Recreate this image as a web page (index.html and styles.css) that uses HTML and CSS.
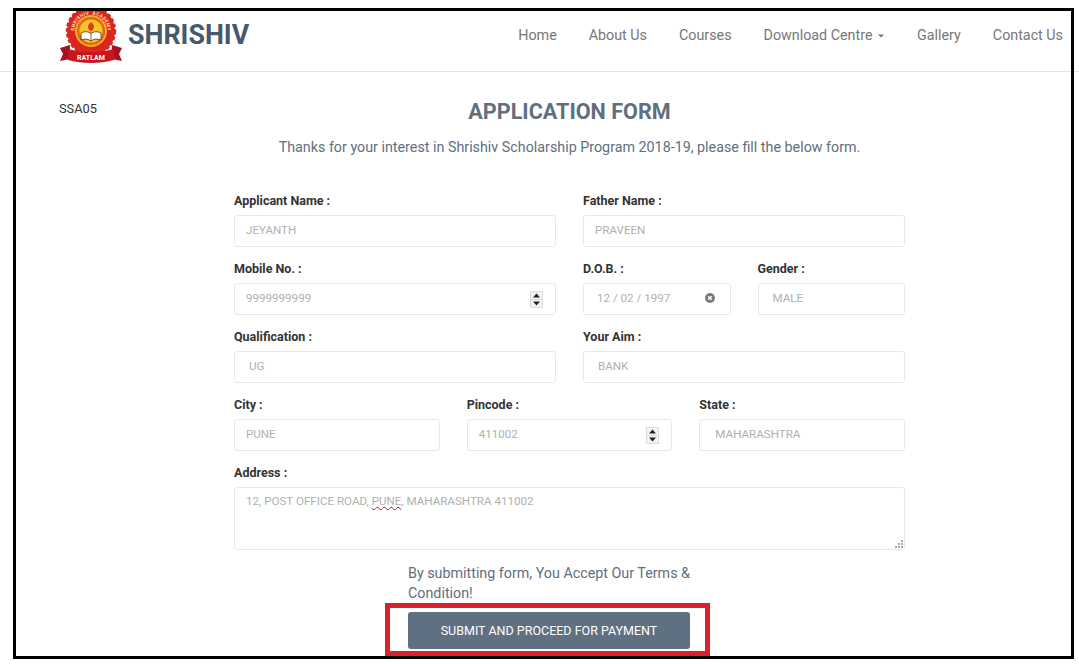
FILE: index.html
```html
<!DOCTYPE html>
<html lang="en">
<head>
<meta charset="utf-8">
<title>Shrishiv Application Form</title>
<link rel="stylesheet" href="styles.css">
</head>
<body>
<header class="navbar">
  <a class="brand">
    <svg class="logo" viewBox="0 0 62 54" aria-hidden="true">
      <defs><path id="logo-arc" d="M15.5 27 A 16.6 16.6 0 1 1 46.5 27"/></defs>
      <circle cx="31" cy="21" r="24" fill="#d9261f" stroke="#d9261f" stroke-width="2.4" stroke-dasharray="3.5 2.2"/>
      <circle cx="31" cy="21" r="16" fill="#f0a91d"/>
      <circle cx="31" cy="21" r="14.5" fill="#e8661c" stroke="#f7cf3a" stroke-width="1" stroke-dasharray="1.5 1"/>
      <circle cx="31" cy="21" r="11.5" fill="#f6c52a"/>
      <text class="logo-ring"><textPath href="#logo-arc" startOffset="50%" text-anchor="middle">SHRISHIV  ACADEMY</textPath></text>
      <path d="M31 12 C34.5 15 35.5 18 31 21.5 C26.5 18 27.5 15 31 12 Z" fill="#dc3a1c"/>
      <path d="M21 23 C25 21 28.5 21.5 31 23.5 C33.5 21.5 37 21 41 23 L41 30 C37 28.5 33.5 29 31 31 C28.5 29 25 28.5 21 30 Z" fill="#fff" stroke="#5e3a17" stroke-width="0.9"/>
      <path d="M31 23.5 V31" stroke="#5e3a17" stroke-width="0.8"/>
      <path d="M10 35 L0 38 L3 44 L0 51 L10 49 Z" fill="#a8121f"/>
      <path d="M52 35 L62 38 L59 44 L62 51 L52 49 Z" fill="#a8121f"/>
      <path d="M8 39 C22 43 40 43 54 39 L54 50 C40 54 22 54 8 50 Z" fill="#c8161f"/>
      <text class="logo-ratlam" x="31" y="49.5" text-anchor="middle">RATLAM</text>
    </svg>
    <span class="brand-name">SHRISHIV</span>
  </a>
  <nav class="nav-links">
    <a>Home</a>
    <a>About Us</a>
    <a>Courses</a>
    <a>Download Centre <i class="caret"></i></a>
    <a>Gallery</a>
    <a>Contact Us</a>
  </nav>
</header>

<main class="content">
  <div class="code">SSA05</div>
  <form class="form">
    <div class="heading-block">
      <h1>APPLICATION FORM</h1>
      <p class="intro">Thanks for your interest in Shrishiv Scholarship Program 2018-19, please fill the below form.</p>
    </div>
    <div class="row">
      <div class="field"><label>Applicant Name :</label><input class="ctl" value="JEYANTH"></div>
      <div class="field"><label>Father Name :</label><input class="ctl" value="PRAVEEN"></div>
    </div>
    <div class="row">
      <div class="field">
        <label>Mobile No. :</label>
        <div class="ctl-wrap">
          <input class="ctl" value="9999999999">
          <svg class="spin" viewBox="0 0 13 17" aria-hidden="true"><rect width="13" height="17" fill="#dcdcdc"/><rect x="1" y="1" width="11" height="7" fill="#f4f4f4"/><rect x="1" y="9" width="11" height="7" fill="#f4f4f4"/><path d="M6.5 2.5 L10 6.5 H3 Z M6.5 14.5 L3 10.5 H10 Z" fill="#222"/></svg>
        </div>
      </div>
      <div class="field">
        <div class="row">
          <div class="field">
            <label>D.O.B. :</label>
            <div class="ctl-wrap">
              <input class="ctl ctl-date" value="12 / 02 / 1997">
              <svg class="clear" viewBox="0 0 10 10" aria-hidden="true"><circle cx="5" cy="5" r="5" fill="#7a7a7a"/><path d="M3.2 3.2 L6.8 6.8 M6.8 3.2 L3.2 6.8" stroke="#fff" stroke-width="1.3"/></svg>
            </div>
          </div>
          <div class="field"><label>Gender :</label><input class="ctl ctl-wide" value="MALE"></div>
        </div>
      </div>
    </div>
    <div class="row">
      <div class="field"><label>Qualification :</label><input class="ctl ctl-wide" value="UG"></div>
      <div class="field"><label>Your Aim :</label><input class="ctl ctl-wide" value="BANK"></div>
    </div>
    <div class="row">
      <div class="field"><label>City :</label><input class="ctl" value="PUNE"></div>
      <div class="field">
        <label>Pincode :</label>
        <div class="ctl-wrap">
          <input class="ctl" value="411002">
          <svg class="spin" viewBox="0 0 13 17" aria-hidden="true"><rect width="13" height="17" fill="#dcdcdc"/><rect x="1" y="1" width="11" height="7" fill="#f4f4f4"/><rect x="1" y="9" width="11" height="7" fill="#f4f4f4"/><path d="M6.5 2.5 L10 6.5 H3 Z M6.5 14.5 L3 10.5 H10 Z" fill="#222"/></svg>
        </div>
      </div>
      <div class="field"><label>State :</label><input class="ctl ctl-state" value="MAHARASHTRA"></div>
    </div>
    <div class="row">
      <div class="field">
        <label>Address :</label>
        <div class="ctl-wrap">
          <div class="ctl ctl-area">12, POST OFFICE ROAD, <span class="misspelt">PUNE</span>, MAHARASHTRA 411002</div>
          <svg class="grip" viewBox="0 0 9 9" aria-hidden="true"><path d="M6 0h2v2H6z M3 3h2v2H3z M6 3h2v2H6z M0 6h2v2H0z M3 6h2v2H3z M6 6h2v2H6z" fill="#a8a8a8"/></svg>
        </div>
      </div>
    </div>
    <div class="submit-block">
      <p class="terms">By submitting form, You Accept Our Terms &amp; Condition!</p>
      <button class="submit" type="button">SUBMIT AND PROCEED FOR PAYMENT</button>
    </div>
  </form>
</main>

<div class="frame" aria-hidden="true"></div>
<div class="highlight" aria-hidden="true"></div>
</body>
</html>
```
FILE: styles.css
```css
* { box-sizing: border-box; }
html, body { margin: 0; height: 100%; }
body {
  position: relative;
  height: 664px;
  overflow: hidden;
  background: #fff;
  font-family: Roboto, "Liberation Sans", sans-serif;
  color: #333;
}

.navbar {
  height: 72px;
  padding: 10px 16px 0 60px;
  display: flex;
  justify-content: space-between;
  border-bottom: 1px solid #e4e4e4;
}
.brand { display: flex; align-items: flex-start; gap: 6px; }
.logo { width: 62px; height: 54px; display: block; }
.logo-ratlam { font: 700 7px Roboto, sans-serif; fill: #fff; }
.logo-ring { font: 700 4.8px Roboto, sans-serif; letter-spacing: 0.3px; fill: #fbe3a0; white-space: pre; }
.brand-name {
  font-size: 26.8px;
  font-weight: 700;
  line-height: 50px;
  color: #47596b;
}
.nav-links {
  display: flex;
  gap: 32px;
  font-size: 14.3px;
  line-height: 50px;
  color: #777;
}
.caret {
  display: inline-block;
  margin-left: 1px;
  vertical-align: middle;
  border-top: 4px solid #777;
  border-left: 4px solid transparent;
  border-right: 4px solid transparent;
  transform: scale(0.8);
}

.content { position: relative; padding-top: 28px; }
.code {
  position: absolute;
  left: 59px;
  top: 28px;
  font-size: 12.8px;
  line-height: 18px;
}
.heading-block { text-align: center; white-space: nowrap; margin-bottom: 21px; }
h1 {
  margin: 0;
  font-size: 21.6px;
  line-height: 24px;
  font-weight: 700;
  color: #5f6f7e;
}
.intro {
  margin: 12px 0 0;
  font-size: 14.3px;
  line-height: 22px;
  color: #5f6f7e;
}

.form {
  width: 671px;
  margin: 0 0 0 234px;
  display: flex;
  flex-direction: column;
  gap: 13px;
}
.row { display: flex; gap: 27px; }
.field { flex: 1 1 0; min-width: 0; }
label {
  display: block;
  height: 23px;
  font-size: 12.5px;
  line-height: 18px;
  font-weight: 700;
  color: #333;
}
.ctl-wrap { position: relative; }
.ctl {
  display: block;
  width: 100%;
  height: 32px;
  padding: 0 11px 2px;
  border: 1px solid #e8e8e8;
  border-radius: 3px;
  background: #fff;
  font: 11.6px Roboto, sans-serif;
  color: #b0b0b0;
  outline: none;
}
.ctl-wide { padding-left: 14px; }
.ctl-date { padding-left: 13px; }
.ctl-state { padding-left: 15px; }
.ctl-area {
  height: 63px;
  padding-top: 5px;
  line-height: 16px;
}
.misspelt { text-decoration: underline wavy #b02020 1px; text-underline-offset: 1px; }
.spin {
  position: absolute;
  right: 13px;
  top: 8px;
  width: 13px;
  height: 17px;
}
.clear {
  position: absolute;
  right: 16px;
  top: 10px;
  width: 10px;
  height: 10px;
}
.grip {
  position: absolute;
  right: 1px;
  bottom: 1px;
  width: 9px;
  height: 9px;
}

.submit-block { width: 290px; margin: 0 0 0 174px; }
.terms {
  margin: 0;
  font-size: 14.3px;
  line-height: 20px;
  color: #5f6f7e;
}
.submit {
  display: block;
  width: 282px;
  height: 37px;
  margin-top: 9px;
  border: 0;
  border-radius: 3px;
  background: #5f7082;
  font: 12.5px Roboto, sans-serif;
  color: #fff;
}

.frame {
  position: absolute;
  left: 13px;
  top: 8px;
  width: 1061px;
  height: 651px;
  border: 3px solid #000;
  pointer-events: none;
}
.highlight {
  position: absolute;
  left: 385px;
  top: 603px;
  width: 325px;
  height: 53px;
  border: 5px solid #d9212c;
  pointer-events: none;
}
```
